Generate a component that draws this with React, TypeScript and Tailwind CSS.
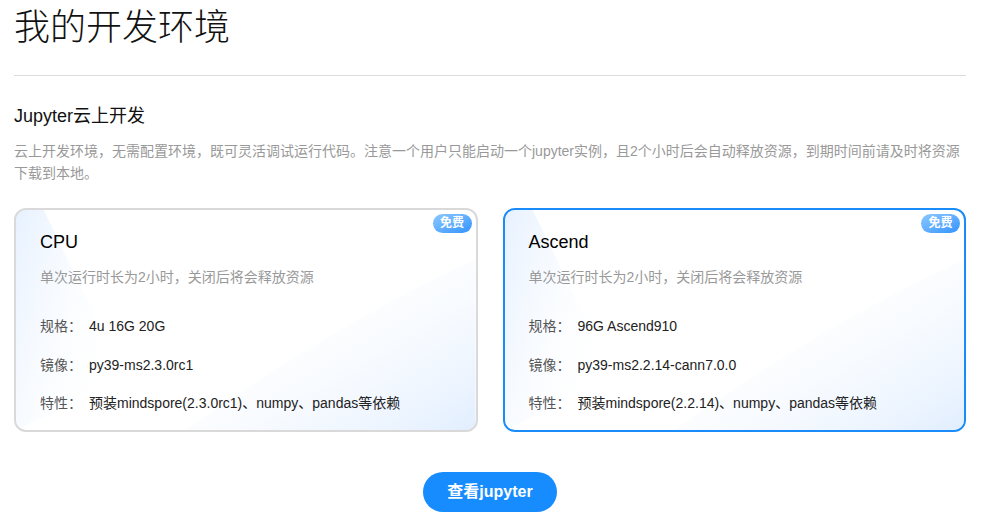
import React from 'react';

const FONT = '"Liberation Sans", "Noto Sans CJK SC", Arial, sans-serif';

interface EnvCard {
  name: string;
  spec: string;
  image: string;
  feature: string;
  active?: boolean;
}

const cards: EnvCard[] = [
  {
    name: 'CPU',
    spec: '4u 16G 20G',
    image: 'py39-ms2.3.0rc1',
    feature: '预装mindspore(2.3.0rc1)、numpy、pandas等依赖',
  },
  {
    name: 'Ascend',
    spec: '96G Ascend910',
    image: 'py39-ms2.2.14-cann7.0.0',
    feature: '预装mindspore(2.2.14)、numpy、pandas等依赖',
    active: true,
  },
];

function CardDecor({ id }: { id: string }) {
  return (
    <svg
      className="absolute inset-0 w-full h-full pointer-events-none"
      viewBox="0 0 463 222"
      preserveAspectRatio="none"
    >
      <defs>
        <linearGradient id={`l-${id}`} x1="0" y1="0" x2="1" y2="0.6">
          <stop offset="0" stopColor="#dcebff" stopOpacity="0.7" />
          <stop offset="1" stopColor="#ffffff" stopOpacity="0" />
        </linearGradient>
        <linearGradient id={`r-${id}`} x1="0" y1="0" x2="1" y2="1">
          <stop offset="0.2" stopColor="#ffffff" stopOpacity="0" />
          <stop offset="1" stopColor="#dcebff" stopOpacity="0.85" />
        </linearGradient>
      </defs>
      <polygon points="0,0 28,0 110,170 0,222" fill={`url(#l-${id})`} />
      <path d="M170,222 Q330,110 463,50 L463,222 Z" fill={`url(#r-${id})`} />
    </svg>
  );
}

function Card({ card }: { card: EnvCard }) {
  const rows = [
    ['规格：', card.spec],
    ['镜像：', card.image],
    ['特性：', card.feature],
  ];
  return (
    <div
      className={`relative overflow-hidden rounded-[12px] border-2 bg-white ${
        card.active ? 'border-[#1a8cfa]' : 'border-[#d9d9d9]'
      }`}
    >
      <CardDecor id={card.name} />
      <span className="absolute top-[4px] right-[4px] h-[19px] w-[39px] rounded-full bg-gradient-to-br from-[#8cc8ff] to-[#2f93ff] text-white text-[12px] leading-[19px] text-center font-bold">
        免费
      </span>
      <div className="relative pl-[24px] pr-4 pt-[20px] pb-[17px]">
        <div className="text-[18px] leading-[24px] text-black">{card.name}</div>
        <div className="mt-[13px] text-[14px] leading-[20px] text-[#999]">
          单次运行时长为2小时，关闭后将会释放资源
        </div>
        <div className="mt-[29px] flex flex-col gap-[18.5px]">
          {rows.map(([label, value]) => (
            <div key={label} className="flex text-[14px] leading-[20px]">
              <span className="w-[49px] shrink-0 text-[#555]">{label}</span>
              <span className="text-[#222]">{value}</span>
            </div>
          ))}
        </div>
      </div>
    </div>
  );
}

export default function App() {
  return (
    <div className="min-h-screen bg-white px-[14px] pb-6" style={{ fontFamily: FONT }}>
      <div className="w-[952px]">
        <h1 className="text-[36px] leading-[56px] font-light text-[#111]">我的开发环境</h1>
        <div className="mt-[19px] h-px bg-[#dcdcdc]" />

        <h3 className="mt-[28px] text-[18px] leading-[24px] text-[#111]">Jupyter云上开发</h3>
        <p className="mt-[12px] text-[14px] leading-[22px] text-[#999]">
          云上开发环境，无需配置环境，既可灵活调试运行代码。注意一个用户只能启动一个jupyter实例，且2个小时后会自动释放资源，到期时间前请及时将资源下载到本地。
        </p>

        <div className="mt-[24px] grid grid-cols-2 gap-[25px]">
          {cards.map(c => (
            <Card key={c.name} card={c} />
          ))}
        </div>

        <div className="mt-[40px] flex justify-center">
          <button className="h-[40px] w-[134px] rounded-full bg-[#168cff] text-white text-[16px] font-bold">
            查看jupyter
          </button>
        </div>
      </div>
    </div>
  );
}
